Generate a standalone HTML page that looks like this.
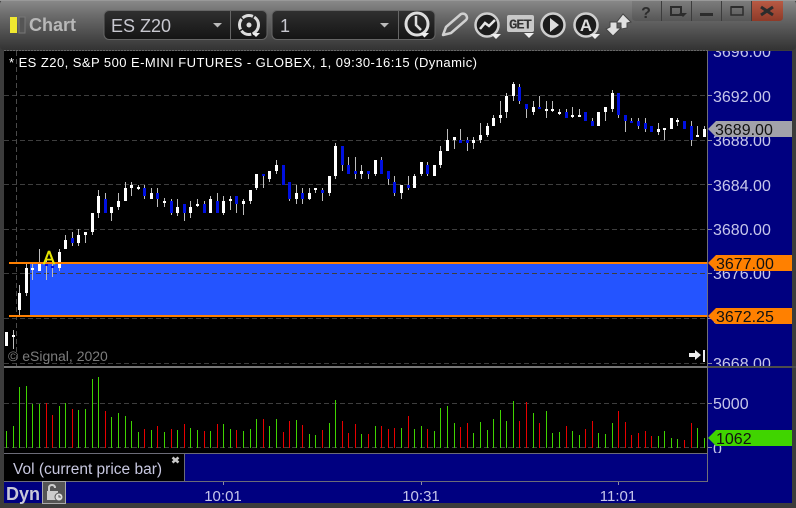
<!DOCTYPE html>
<html><head><meta charset="utf-8"><style>
html,body{margin:0;padding:0;width:796px;height:508px;overflow:hidden;background:#3c3c3c}
svg{display:block;font-family:"Liberation Sans",sans-serif}
</style></head><body>
<svg width="796" height="508" viewBox="0 0 796 508" xmlns="http://www.w3.org/2000/svg">
<defs>
<linearGradient id="tb" x1="0" y1="0" x2="0" y2="1"><stop offset="0" stop-color="#8a8a8a"/><stop offset=".3" stop-color="#6c6c6c"/><stop offset="1" stop-color="#333"/></linearGradient>
<linearGradient id="cb" x1="0" y1="0" x2="0" y2="1"><stop offset="0" stop-color="#303030"/><stop offset="1" stop-color="#141414"/></linearGradient>
<linearGradient id="wb" x1="0" y1="0" x2="0" y2="1"><stop offset="0" stop-color="#7c7c7c"/><stop offset="1" stop-color="#565656"/></linearGradient>
<linearGradient id="wr" x1="0" y1="0" x2="0" y2="1"><stop offset="0" stop-color="#b85a44"/><stop offset="1" stop-color="#8e3a28"/></linearGradient>
<clipPath id="axc"><rect x="708" y="51" width="84" height="315"/></clipPath>
<clipPath id="axv"><rect x="708" y="368" width="84" height="85"/></clipPath>
</defs>
<rect width="796" height="508" fill="#3c3c3c"/>
<rect width="796" height="50" rx="4" fill="url(#tb)"/>
<rect x="0" y="0" width="796" height="1" fill="#999"/>

<!-- title -->
<rect x="10" y="17" width="7" height="16" fill="#f0e830"/>
<rect x="19" y="17" width="6" height="16" fill="#555" stroke="#777"/>
<text x="29" y="31" font-size="18" font-weight="bold" fill="#b8b8b8">Chart</text>

<!-- combos -->
<rect x="104" y="10.500" width="163" height="29" rx="5" fill="url(#cb)" stroke="#666"/>
<path d="M230.500 11V39" stroke="#666"/>
<text x="111" y="32" font-size="18" fill="#c8c8d0">ES Z20</text>
<path d="M213 23h9l-4.500 4.500z" fill="#bbb"/>
<circle cx="249" cy="25" r="9.500" fill="none" stroke="#ddd" stroke-width="3" stroke-dasharray="11 1.500"/>
<circle cx="249" cy="25" r="2.500" fill="#ddd"/>
<path d="M252 33h8l-4 4z" fill="#eee"/>
<rect x="272" y="10.500" width="163" height="29" rx="5" fill="url(#cb)" stroke="#666"/>
<path d="M398.500 11V39" stroke="#666"/>
<text x="280" y="32" font-size="18" fill="#c8c8d0">1</text>
<path d="M380 23h9l-4.500 4.500z" fill="#bbb"/>
<circle cx="417" cy="24" r="11" fill="none" stroke="#ddd" stroke-width="3"/>
<path d="M416 16V25L421 30" fill="none" stroke="#ddd" stroke-width="2.500"/>
<path d="M420 33h9l-4.500 4.500z" fill="#eee"/>

<!-- toolbar icons -->
<path d="M443 35L446 27L461 14Q464 13 466 15Q468 18 466 20L451 33Z" fill="none" stroke="#d0d0d0" stroke-width="2.500" stroke-linejoin="round"/>
<circle cx="487" cy="25" r="11.500" fill="#1c1c1c" stroke="#cfcfcf" stroke-width="2.500"/>
<path d="M480 29L485 23L489 26L495 20" fill="none" stroke="#e6e6e6" stroke-width="2.500"/>
<path d="M491 34h10l-5 5z" fill="#eee"/>
<rect x="507" y="15" width="27" height="17" rx="2" fill="#c8c8c8"/>
<text x="520.500" y="28.500" font-size="14" font-weight="bold" fill="#333" text-anchor="middle" font-family="Liberation Mono, monospace" textLength="23">GET</text>
<path d="M524 33h10l-5 5z" fill="#eee"/>
<circle cx="553" cy="25" r="11.500" fill="#1c1c1c" stroke="#cfcfcf" stroke-width="2.500"/>
<path d="M550 18L559 25L550 32Z" fill="#ddd"/>
<circle cx="586" cy="25" r="11.500" fill="#1c1c1c" stroke="#cfcfcf" stroke-width="2.500"/>
<text x="586" y="31" font-size="17" font-weight="bold" fill="#ddd" text-anchor="middle">A</text>
<path d="M590 34h10l-5 5z" fill="#eee"/>
<path d="M623 14L631 22L627 23V28L621 29V23L616 23Z" fill="#e0e0e0" stroke="#444"/>
<path d="M613 36L606 29L610 27V22L617 22V28L621 28Z" fill="#e0e0e0" stroke="#444"/>

<!-- window buttons -->
<path d="M632 1H783V17Q783 21 779 21H636Q632 21 632 17Z" fill="url(#wb)"/>
<path d="M751 1H783V17Q783 21 779 21H751Z" fill="url(#wr)"/>
<path d="M661.500 1V21M691.500 1V21M721.500 1V21M751.500 1V21" stroke="#3c3c3c"/>
<text x="646" y="18" font-size="16" font-weight="bold" fill="#2c2c2c" text-anchor="middle">?</text>
<rect x="671" y="7" width="10" height="8" fill="none" stroke="#2c2c2c" stroke-width="2"/>
<path d="M679 13h8l-4 4z" fill="#2c2c2c"/>
<rect x="700" y="13" width="13" height="3" fill="#2c2c2c"/>
<rect x="731" y="7" width="12" height="8" fill="none" stroke="#2c2c2c" stroke-width="1.500"/>
<path d="M731 7h12" stroke="#2c2c2c" stroke-width="2"/>
<path d="M761 7L773 15M773 7L761 15" stroke="#2c2c2c" stroke-width="3"/>

<!-- chart -->
<rect x="4" y="51" width="704" height="315" fill="#000"/>
<path d="M4 50.500H708" stroke="#666" stroke-dasharray="2 1"/>
<rect x="4" y="368" width="704" height="85" fill="#000"/>
<rect x="30" y="263" width="678" height="53" fill="#2454ff"/>

<g shape-rendering="crispEdges">
<path d="M4 95.500H708M4 140.500H708M4 184.500H708M4 229.500H708M4 273.500H708M4 318.500H708M4 363.500H708M4 403.500H708M4 447.500H708" stroke="#3e3e3e" stroke-dasharray="5 3"/>
<path d="M16.500 51V366" stroke="#4a4a4a" stroke-dasharray="5 3"/>

<path stroke="#bdbdbd" fill="none" d="M13.500 330V349M19.500 285V315M26.500 264V296M32.500 263V280M39.500 249V271M46.500 257V280M52.500 260V277M59.500 249V271M65.500 235V249M72.500 232V246M78.500 229V246M85.500 232V243M92.500 213V235M98.500 190V218M105.500 193V213M111.500 207V221M118.500 193V210M125.500 182V201M131.500 182V196M138.500 185V190M144.500 185V199M151.500 188V199M157.500 188V207M164.500 198V207M171.500 199V215M177.500 199V216M184.500 204V221M190.500 201V218M197.500 199V207M204.500 201V213M210.500 196V213M217.500 193V213M223.500 196V215M230.500 196V210M236.500 196V213M243.500 199V215M250.500 190V204M256.500 174V190M263.500 174V188M269.500 171V182M276.500 160V174M289.500 182V201M296.500 185V204M302.500 188V204M309.500 188V200M315.500 188V193M322.500 188V201M329.500 176V196M335.500 143V179M342.500 146V171M348.500 157V174M355.500 157V179M361.500 165V179M368.500 171V179M375.500 160V176M381.500 157V174M388.500 171V185M394.500 176V196M401.500 185V199M408.500 176V190M414.500 174V188M421.500 162V176M427.500 162V176M440.500 146V168M447.500 129V151M454.500 137V149M460.500 129V143M467.500 137V151M473.500 137V149M480.500 123V143M487.500 123V137M493.500 115V126M500.500 101V123M506.500 93V118M513.500 82V101M519.500 84V104M526.500 104V118M533.500 101V115M539.500 96V109M546.500 101V118M552.500 101V112M559.500 109V115M566.500 109V118M572.500 107V118M579.500 109V117M592.500 118V126M605.500 107V121M612.500 90V112M618.500 93V118M625.500 115V132M631.500 118V123M638.500 118V129M645.500 118V132M658.500 123V135M664.500 128V140M677.500 118V126M691.500 121V146M697.500 126V137M704.500 126V137"/>

<path stroke="#fff" stroke-width="3" fill="none" d="M6.500 332V346M13.500 335V337M19.500 293V310M26.500 268V293M32.500 268V270M39.500 263V271M59.500 252V268M65.500 240V249M78.500 235V243M85.500 232V235M92.500 213V232M98.500 196V213M111.500 207V213M118.500 201V207M125.500 188V201M131.500 185V188M138.500 187V189M151.500 193V199M164.500 201V203M177.500 207V213M190.500 207V213M197.500 204V206M210.500 199V213M223.500 201V213M230.500 199V201M243.500 201V204M250.500 190V201M256.500 174V188M269.500 171V179M276.500 165V171M296.500 193V199M309.500 193V199M315.500 188V190M329.500 176V193M335.500 146V176M361.500 171V174M375.500 160V174M401.500 185V193M414.500 176V188M421.500 162V174M434.500 165V176M440.500 151V165M447.500 140V151M454.500 137V140M473.500 140V143M480.500 135V140M487.500 126V135M493.500 118V126M500.500 115V118M506.500 96V112M513.500 84V96M533.500 107V112M546.500 109V111M552.500 109V111M559.500 112V114M572.500 115V117M579.500 115V117M598.500 112V126M605.500 107V112M612.500 93V109M658.500 129V132M664.500 128V130M671.500 118V129M677.500 120V122M697.500 135V137M704.500 129V137"/>

<path stroke="#0010e0" stroke-width="3" fill="none" d="M46.500 263V266M52.500 266V268M72.500 238V243M105.500 199V213M144.500 188V196M157.500 193V199M171.500 201V213M184.500 204V213M204.500 204V213M217.500 201V213M236.500 196V204M263.500 174V176M283.500 165V185M289.500 182V199M302.500 193V199M322.500 190V193M342.500 146V165M348.500 165V174M355.500 171V174M368.500 171V174M381.500 160V174M388.500 171V179M394.500 182V193M408.500 185V188M427.500 165V174M460.500 140V143M467.500 140V143M519.500 87V101M526.500 104V109M539.500 107V109M566.500 112V118M585.500 112V121M592.500 121V126M618.500 93V115M625.500 115V121M631.500 121V123M638.500 121V126M645.500 123V129M651.500 126V132M684.500 121V129M691.500 126V140"/>

<rect x="9" y="262" width="699" height="2" fill="#ff8000"/>
<rect x="9" y="315" width="699" height="2" fill="#ff8000"/>

<!-- volume -->
<path stroke="#3fd400" fill="none" d="M6.500 431V448M13.500 426V448M19.500 387V448M26.500 386V448M32.500 404V448M39.500 404V448M59.500 406V448M65.500 403V448M78.500 410V448M85.500 409V448M92.500 379V448M98.500 377V448M111.500 417V448M118.500 413V448M125.500 416V448M131.500 421V448M138.500 432V448M151.500 430V448M164.500 432V448M177.500 430V448M190.500 428V448M197.500 430V448M210.500 431V448M223.500 424V448M230.500 429V448M243.500 431V448M250.500 429V448M256.500 419V448M269.500 426V448M276.500 419V448M296.500 420V448M309.500 434V448M315.500 435V448M329.500 423V448M335.500 400V448M361.500 434V448M375.500 426V448M401.500 428V448M414.500 429V448M421.500 426V448M434.500 431V448M440.500 408V448M447.500 406V448M454.500 423V448M473.500 433V448M480.500 422V448M487.500 430V448M493.500 419V448M500.500 410V448M506.500 421V448M513.500 401V448M533.500 413V448M546.500 411V448M552.500 433V448M559.500 432V448M572.500 431V448M579.500 435V448M598.500 433V448M605.500 434V448M612.500 423V448M658.500 436V448M664.500 431V448M671.500 438V448M677.500 439V448M697.500 428V448M704.500 438V448"/>
<path stroke="#e80000" fill="none" d="M46.500 403V448M52.500 415V448M72.500 409V448M105.500 411V448M144.500 429V448M157.500 426V448M171.500 429V448M184.500 424V448M204.500 431V448M217.500 424V448M236.500 430V448M263.500 419V448M283.500 432V448M289.500 421V448M302.500 425V448M322.500 430V448M342.500 421V448M348.500 433V448M355.500 424V448M368.500 434V448M381.500 426V448M388.500 429V448M394.500 428V448M408.500 416V448M427.500 429V448M460.500 427V448M467.500 423V448M519.500 421V448M526.500 402V448M539.500 423V448M566.500 426V448M585.500 429V448M592.500 421V448M618.500 411V448M625.500 422V448M631.500 435V448M638.500 433V448M645.500 431V448M651.500 436V448M684.500 440V448M691.500 423V448"/>

<!-- panel lines and blue panels -->
<rect x="184" y="454" width="524" height="27" fill="#000080"/>
<rect x="4" y="454" width="180" height="27" fill="#000"/>
<rect x="4" y="482" width="788" height="21" fill="#000080"/>
<rect x="708" y="51" width="84" height="452" fill="#000080"/>
<rect x="4" y="366" width="704" height="2" fill="#777"/>
<rect x="708" y="366" width="88" height="2" fill="#4c4c4c"/>
<rect x="4" y="453" width="704" height="1" fill="#6c6c78"/>
<rect x="184" y="453" width="1" height="28" fill="#6c6c78"/>
<rect x="4" y="481" width="704" height="1" fill="#6c6c78"/>
<rect x="707" y="51" width="1" height="431" fill="#707078"/>
<path d="M708 95.500h4M708 140.500h4M708 184.500h4M708 229.500h4M708 273.500h4M708 318.500h4M708 363.500h4M708 403.500h4M708 447.500h4M223.500 482v3M421.500 482v3M618.500 482v3" stroke="#8a8aa8"/>
</g>

<!-- axis text -->
<g font-size="16" fill="#c6c6ea" clip-path="url(#axc)">
<text x="713" y="57">3696.00</text>
<text x="713" y="102">3692.00</text>
<text x="713" y="146">3688.00</text>
<text x="713" y="191">3684.00</text>
<text x="713" y="235">3680.00</text>
<text x="713" y="279">3676.00</text>
<text x="713" y="324">3672.00</text>
<text x="713" y="369">3668.00</text>
</g>
<g font-size="16" fill="#c6c6ea" clip-path="url(#axv)">
<text x="713" y="409">5000</text>
<text x="713" y="454">0</text>
</g>

<!-- price labels -->
<path d="M708 129L716 121H792V137H716Z" fill="#a2a2aa"/>
<text x="715" y="135" font-size="16" fill="#111">3689.00</text>
<path d="M708 263L716 255H792V271H716Z" fill="#ff8000"/>
<text x="716" y="269" font-size="16" fill="#111">3677.00</text>
<path d="M708 316L716 308H792V324H716Z" fill="#ff8000"/>
<text x="716" y="322" font-size="16" fill="#111">3672.25</text>
<path d="M708 438L716 430H792V446H716Z" fill="#40d400"/>
<text x="716" y="444" font-size="16" fill="#111">1062</text>

<!-- chart text -->
<text x="9" y="67" font-size="13" fill="#fff" textLength="468">* ES Z20, S&amp;P 500 E-MINI FUTURES - GLOBEX, 1, 09:30-16:15 (Dynamic)</text>
<text x="43" y="264" font-size="18" fill="#e6e600" stroke="#e6e600" stroke-width=".4">A</text>
<text x="8" y="361" font-size="14" fill="#7c7c7c">© eSignal, 2020</text>
<path d="M689 353H695V350L701 355L695 360V357H689Z" fill="#eee"/>
<rect x="703" y="350" width="2" height="12" fill="#eee"/>

<text x="13" y="474" font-size="15.500" fill="#c8c8e0">Vol (current price bar)</text>
<path d="M172.500 457.500L178.500 462.500M178.500 457.500L172.500 462.500" stroke="#c8c8c8" stroke-width="2.500"/>

<text x="6" y="500" font-size="18" font-weight="bold" fill="#c8c8d8">Dyn</text>
<rect x="42.500" y="481.500" width="23" height="22" fill="#555" stroke="#aaa"/>
<path d="M47 491h11v9h-11z" fill="#ccc"/>
<path d="M49 491v-3q0-3 3-3t3 3" fill="none" stroke="#ccc" stroke-width="2"/>
<circle cx="59" cy="497" r="4" fill="#ddd" stroke="#555"/>
<path d="M59 495v2h2" fill="none" stroke="#555"/>
<g font-size="15" fill="#c6c6ea" text-anchor="middle">
<text x="223" y="501">10:01</text>
<text x="421" y="501">10:31</text>
<text x="618" y="501">11:01</text>
</g>
</svg>
</body></html>
